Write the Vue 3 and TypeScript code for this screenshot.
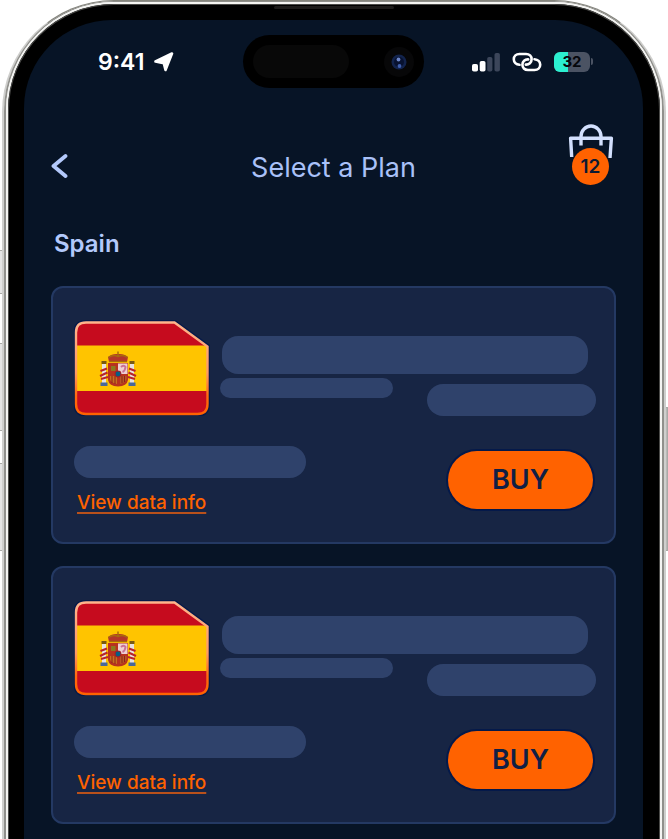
<script setup lang="ts">
interface Plan {
  id: number
  country: string
}

const cartCount: number = 12
const batteryLevel: number = 32
const plans: Plan[] = [
  { id: 1, country: 'Spain' },
  { id: 2, country: 'Spain' },
]
</script>

<template>
  <div class="stage">
    <span class="key key-action"></span>
    <span class="key key-up"></span>
    <span class="key key-down"></span>
    <span class="key key-power"></span>

    <div class="frame">
      <div class="frame-edge">
        <div class="frame-shine">
          <div class="bezel">
            <span class="speaker"></span>
            <main class="screen">
              <div class="status">
                <div class="status-left">
                  <span class="clock">9:41</span>
                  <svg class="arrow" width="20" height="20" viewBox="0 0 20 20" aria-hidden="true">
                    <path d="M18 1.500 L11.500 18 L9.800 11.200 L1.500 9.500 Z" fill="#fff" stroke="#fff" stroke-width="2.600" stroke-linejoin="round" />
                  </svg>
                </div>
                <div class="island">
                  <span class="sensor"></span>
                  <svg class="lens" width="30" height="30" viewBox="0 0 30 30" aria-hidden="true">
                    <circle cx="15" cy="15" r="15" fill="#070708" />
                    <circle cx="15" cy="15" r="7.500" fill="#12234c" />
                    <circle cx="15" cy="15" r="5" fill="#081230" />
                    <circle cx="14.500" cy="12.500" r="1.900" fill="#6d86c8" />
                    <circle cx="15.500" cy="19" r="1.900" fill="#405fae" />
                  </svg>
                </div>
                <div class="status-right">
                  <svg width="28" height="20" viewBox="0 0 28 20" aria-hidden="true">
                    <rect x="0" y="12" width="6" height="7.500" rx="1.800" fill="#fff" />
                    <rect x="7.700" y="9" width="5.800" height="10.500" rx="1.800" fill="#fff" />
                    <rect x="15.200" y="5" width="5.200" height="14.500" rx="1.800" fill="#3c465a" />
                    <rect x="22.500" y="1" width="5.400" height="18.500" rx="1.800" fill="#3c465a" />
                  </svg>
                  <svg width="30" height="20" viewBox="0 0 30 20" aria-hidden="true" fill="none" stroke="#fff" stroke-width="2.600" stroke-linecap="round">
                    <path d="M7.500 12.800 C4 12.500 1.800 10.200 1.800 7.300 C1.800 4 4.200 2 7.400 2 H14 C17.500 2 19.600 4.200 19.600 7.200 C19.600 10.800 17 12.800 13.800 12.600" />
                    <path d="M22.500 7.200 C26 7.500 28.200 9.800 28.200 12.700 C28.200 16 25.800 18 22.600 18 H16 C12.500 18 10.400 15.800 10.400 12.800 C10.400 9.200 13 7.200 16.200 7.400" />
                  </svg>
                  <div class="battery">
                    <div class="battery-body">
                      <span class="battery-fill" :style="{ width: batteryLevel + 8 + '%' }"></span>
                      <span class="battery-text">{{ batteryLevel }}</span>
                    </div>
                    <span class="battery-tip"></span>
                  </div>
                </div>
              </div>

              <header class="header">
                <button class="back" type="button" aria-label="Back">
                  <svg width="18" height="26" viewBox="0 0 18 26" aria-hidden="true">
                    <path d="M14.500 3 L2.500 13 L14.500 23" fill="none" stroke="#b3c9fb" stroke-width="3.800" stroke-linecap="round" stroke-linejoin="round" />
                  </svg>
                </button>
                <h1 class="title">Select a Plan</h1>
                <button class="cart" type="button" aria-label="Cart">
                  <svg width="46" height="40" viewBox="0 0 46 40" aria-hidden="true" fill="none" stroke="#d3e0fd" stroke-width="3.400">
                    <path d="M3.700 33 L2.600 14.200 H43.400 L42 34" stroke-linejoin="round" />
                    <path d="M13 21.500 V12.500 A10 10.500 0 0 1 33 12.500 V21.500" />
                  </svg>
                  <span class="badge">{{ cartCount }}</span>
                </button>
              </header>

              <h2 class="country">Spain</h2>

              <section class="plans">
                <article v-for="plan in plans" :key="plan.id" class="card">
                  <div class="card-top">
                    <svg class="flag" width="136" height="96" viewBox="0 0 136 96" role="img" :aria-label="plan.country">
                      <defs>
                        <linearGradient :id="'rim' + plan.id" x1="0" y1="0" x2="0" y2="1">
                          <stop offset="0" stop-color="#ffb48c" />
                          <stop offset="0.55" stop-color="#ff9a62" />
                          <stop offset="0.8" stop-color="#ff6a10" />
                          <stop offset="1" stop-color="#ff6200" />
                        </linearGradient>
                        <clipPath :id="'sim' + plan.id">
                          <path d="M12 2.500 H100.500 L133.500 26.500 V84 Q133.500 94 123.500 94 H12 Q2 94 2 84 V12.500 Q2 2.500 12 2.500 Z" />
                        </clipPath>
                      </defs>
                      <path d="M12 2.500 H100.500 L133.500 26.500 V84 Q133.500 94 123.500 94 H12 Q2 94 2 84 V12.500 Q2 2.500 12 2.500 Z" fill="none" stroke="#04194a" stroke-width="5" />
                      <g :clip-path="`url(#sim${plan.id})`">
                        <rect width="136" height="96" fill="#c60b1e" />
                        <rect y="25.500" width="136" height="45.500" fill="#ffc400" />
                      </g>
                      <g transform="translate(26 31)">
                        <rect x="2" y="11" width="4" height="21" fill="#e8e3df" />
                        <rect x="30" y="11" width="4" height="21" fill="#e8e3df" />
                        <rect x="1.500" y="10" width="5" height="3" fill="#7a5a10" />
                        <rect x="29.500" y="10" width="5" height="3" fill="#7a5a10" />
                        <rect x="0.500" y="31.500" width="7" height="3.500" fill="#49689a" />
                        <rect x="28.500" y="31.500" width="7" height="3.500" fill="#49689a" />
                        <path d="M0.500 20 L7 17.500 M0 25 L7.500 21.500 M1 28 L8 26 M35.500 20 L29 17.500 M36 25 L28.500 21.500 M35 28 L28 26" stroke="#b8242a" stroke-width="2" />
                        <path d="M9 11 L8 6 Q12 2.500 18 3 Q24 2.500 28 6 L27 11 Z" fill="#b3352a" />
                        <path d="M8.500 6.500 Q13 3 18 5.500 Q23 3 27.500 6.500 M18 0.500 V6 M9 10.500 H27" stroke="#a8690d" stroke-width="1.500" fill="none" />
                        <path d="M8 12 H28 V29 Q27 35 18 35.500 Q9 35 8 29 Z" fill="#b8321f" />
                        <path d="M18 12.500 H27.500 V23 H18 Z" fill="#eed0d2" />
                        <path d="M21 16 Q24 13.500 25.500 16 Q25 20 22.500 21" stroke="#ca7295" stroke-width="2" fill="none" />
                        <path d="M11 15 H15.500 V20 H11 Z" fill="#8a7a20" />
                        <path d="M10 25 H17 V33 Q10.500 32 10 28 Z" fill="#c7711e" />
                        <path d="M20 25 H26.500 V28 Q25.500 32 20 33 Z" fill="#b55a22" />
                        <path d="M12 25 V32 M15 25 V33 M22 25 V32 M24.500 25 V31" stroke="#8e1f1b" stroke-width="1" />
                        <circle cx="18" cy="23" r="3.400" fill="#a32029" />
                        <circle cx="18" cy="23" r="2.400" fill="#075f83" />
                      </g>
                      <path d="M12 2.500 H100.500 L133.500 26.500 V84 Q133.500 94 123.500 94 H12 Q2 94 2 84 V12.500 Q2 2.500 12 2.500 Z" fill="none" :stroke="`url(#rim${plan.id})`" stroke-width="2.400" />
                    </svg>
                    <div class="details">
                      <span class="pill pill-name"></span>
                      <div class="details-row">
                        <span class="pill pill-term"></span>
                        <span class="pill pill-price"></span>
                      </div>
                    </div>
                  </div>
                  <div class="card-bottom">
                    <div class="data">
                      <span class="pill pill-data"></span>
                      <a class="info" href="#">View data info</a>
                    </div>
                    <button class="buy" type="button">BUY</button>
                  </div>
                </article>
              </section>
            </main>
          </div>
        </div>
      </div>
    </div>
  </div>
</template>

<style>
body {
  background: #fff;
}
</style>

<style scoped>
.stage {
  position: relative;
  padding: 0 2px;
  font-family: Inter, "Liberation Sans", sans-serif;
  overflow: hidden;
}

.key {
  position: absolute;
  left: 0;
  width: 4px;
  box-sizing: border-box;
  border: 1px solid #a9a9a6;
  border-left: 0;
  background: #e4e4e4;
}

.key-action { top: 250px; height: 44px; }
.key-up { top: 343px; height: 88px; }
.key-down { top: 463px; height: 88px; }

.key-power {
  top: 407px;
  left: auto;
  right: 0;
  height: 144px;
  background: #b9b9b7;
}

.frame {
  position: relative;
  border: 2px solid #cfcfcd;
  border-width: 1px 2px 0;
  border-top-color: #85857d;
  border-radius: 112px 112px 0 0;
}

.frame-edge {
  border: 2px solid #90908c;
  border-width: 1px 2px 0;
  border-radius: 110px 110px 0 0;
}

.frame-shine {
  border: 2px solid #f4f4f2;
  border-bottom: 0;
  border-radius: 108px 108px 0 0;
  background: #000;
}

.bezel {
  position: relative;
  border: 1px solid #4a4a48;
  border-bottom: 0;
  border-radius: 106px 106px 0 0;
  padding: 15px 16px 0 15px;
  background: #000;
}

.speaker {
  position: absolute;
  top: 1px;
  left: 50%;
  width: 120px;
  height: 3px;
  margin-left: -60px;
  border-radius: 2px;
  background: #1c1b1a;
}

.screen {
  padding: 15px 27px;
  border-radius: 88px 88px 0 0;
  background: #071426;
}

.status {
  display: grid;
  grid-template-columns: 1fr 181px 1fr;
  align-items: center;
}

.status-left {
  display: flex;
  align-items: center;
  gap: 10px;
  padding-left: 47px;
}

.clock {
  color: #fff;
  font-size: 23px;
  font-weight: 600;
  line-height: 28px;
}

.island {
  display: flex;
  align-items: center;
  justify-content: space-between;
  height: 53px;
  box-sizing: border-box;
  padding: 0 10px;
  border-radius: 27px;
  background: #000;
}

.sensor {
  width: 96px;
  height: 33px;
  border-radius: 17px;
  background: #080808;
}

.status-right {
  display: flex;
  align-items: center;
  justify-content: flex-end;
  gap: 12px;
  padding-right: 23px;
}

.battery {
  display: flex;
  align-items: center;
  gap: 1px;
}

.battery-body {
  position: relative;
  width: 36px;
  height: 20px;
  border-radius: 6px;
  background: #4b5363;
  overflow: hidden;
}

.battery-fill {
  position: absolute;
  inset: 0 auto 0 0;
  background: #2bf0d0;
}

.battery-text {
  position: relative;
  display: block;
  color: #05070c;
  font-size: 15px;
  font-weight: 700;
  line-height: 20px;
  text-align: center;
}

.battery-tip {
  width: 2px;
  height: 7px;
  border-radius: 0 2px 2px 0;
  background: #4b5363;
}

.header {
  display: grid;
  grid-template-columns: 1fr auto 1fr;
  align-items: end;
  margin-top: 36px;
}

.back,
.cart {
  padding: 0;
  border: 0;
  background: none;
  cursor: pointer;
}

.back {
  display: flex;
  align-items: center;
  justify-self: start;
  height: 38px;
}

.title {
  margin: 0;
  color: #a9c1f8;
  font-size: 27px;
  font-weight: 400;
  line-height: 34px;
}

.cart {
  position: relative;
  justify-self: end;
  width: 46px;
  height: 61px;
  margin-right: 2px;
}

.cart svg {
  display: block;
  margin-bottom: 21px;
}

.badge {
  position: absolute;
  left: 4px;
  bottom: 0;
  width: 37px;
  height: 37px;
  border-radius: 50%;
  background: #ff6200;
  color: #0b1a33;
  font: 600 19px/37px Inter, "Liberation Sans", sans-serif;
  text-align: center;
}

.country {
  margin: 43px 3px 26px;
  color: #b3c9fb;
  font-size: 24px;
  font-weight: 600;
  line-height: 32px;
}

.plans {
  display: grid;
  gap: 22px;
}

.card {
  padding: 32px 18px 26px 21px;
  border: 2px solid #243963;
  border-radius: 12px;
  background: #172544;
}

.card-top {
  display: flex;
  align-items: flex-end;
  gap: 10px;
}

.flag {
  flex: none;
}

.details {
  flex: 1;
}

.pill {
  display: block;
  background: #2f426b;
}

.pill-name {
  height: 38px;
  margin: 0 8px 4px 2px;
  border-radius: 16px;
}

.details-row {
  display: flex;
  justify-content: space-between;
  align-items: flex-start;
}

.pill-term {
  width: 46%;
  height: 20px;
  border-radius: 10px;
}

.pill-price {
  width: 45%;
  height: 32px;
  margin-top: 6px;
  border-radius: 16px;
}

.card-bottom {
  display: flex;
  justify-content: space-between;
  align-items: flex-start;
  margin-top: 30px;
}

.pill-data {
  width: 232px;
  height: 32px;
  border-radius: 16px;
}

.info {
  display: inline-block;
  margin: 12px 3px 0;
  color: #ff6200;
  font-size: 19px;
  font-weight: 500;
  line-height: 26px;
  text-decoration: underline;
  text-decoration-color: #b9511b;
  text-decoration-thickness: 2px;
  text-decoration-skip-ink: none;
  text-underline-offset: 3px;
}

.buy {
  width: 145px;
  height: 58px;
  margin: 5px 3px 0 0;
  padding: 0;
  border: 0;
  border-radius: 29px;
  background: #ff6200;
  box-shadow: 0 0 0 2px #04194a;
  color: #101f45;
  font: 600 27px/58px Inter, "Liberation Sans", sans-serif;
  cursor: pointer;
}
</style>
